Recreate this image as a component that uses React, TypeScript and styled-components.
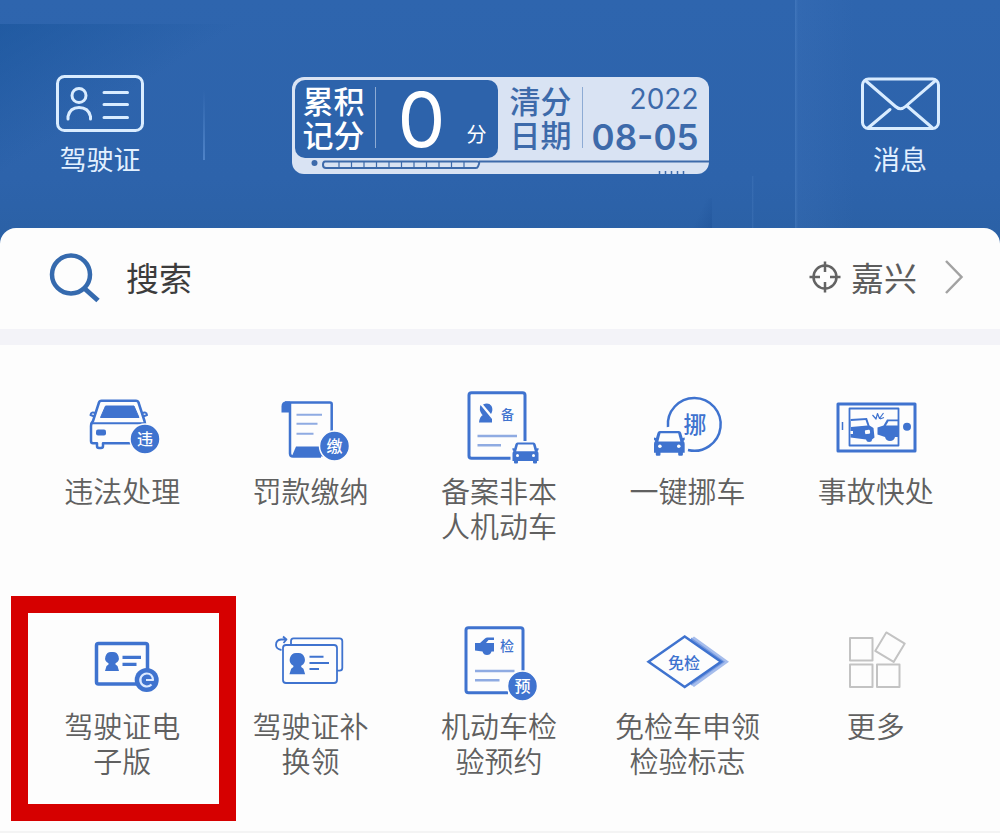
import React from "react";
import styled, { createGlobalStyle } from "styled-components";

const BLUE = "#3f73cf";
const SOFT = "#8fabe2";
const CJK = '"Noto Sans CJK SC", sans-serif';

const GlobalStyle = createGlobalStyle`
  *, *::before, *::after { box-sizing: border-box; }
  body { margin: 0; background: #fdfdfd; font-family: ${CJK}; }
  button, input { font: inherit; color: inherit; border: 0; padding: 0; margin: 0; background: none; }
  button { cursor: pointer; }
  svg { display: block; }
`;

const Page = styled.div`
  width: 100%;
`;

const Header = styled.header`
  display: flex;
  align-items: flex-start;
  height: 256px;
  padding-top: 72px;
  background:
    linear-gradient(to right, rgba(120, 170, 230, 0.25), rgba(90, 140, 210, 0.1) 3px, transparent 60px) right / 205px 100% no-repeat,
    linear-gradient(to right, rgba(110, 160, 220, 0.2), transparent 2px) right 246px top 176px / 2px 60px no-repeat,
    linear-gradient(115deg, transparent 50%, rgba(20, 70, 140, 0.4)) right 288px top 198px / 30px 40px no-repeat,
    linear-gradient(to bottom right, rgba(20, 80, 150, 0.5), transparent 50%) left top 24px / 240px 150px no-repeat,
    linear-gradient(to bottom, #2e65ae, #2d63ab 70%, #2a60a4);
`;

const HeaderButton = styled.button`
  display: flex;
  flex-direction: column;
  align-items: center;
  flex: 0 0 200px;
  color: #e2f0ff;
  font-size: 27px;
  line-height: 40px;
  gap: 5px;
`;

const HeaderDivider = styled.div<{ $visible?: boolean }>`
  flex: 0 0 2px;
  height: 70px;
  margin: 18px 3px 0;
  background: ${(p) => (p.$visible ? "linear-gradient(transparent, #4f83c8)" : "none")};
`;

const ScoreSlot = styled.div`
  flex: 1;
  display: flex;
  justify-content: center;
  padding-top: 5px;
`;

const ScoreCard = styled.section`
  flex: 0 1 417px;
  border-radius: 12px;
  background: #d9e3f3;
  color: #3d6aaa;
`;

const ScoreRow = styled.div`
  display: flex;
  height: 81px;
  padding: 3px 0 0 3px;
`;

const PointsPanel = styled.div`
  display: flex;
  align-items: center;
  flex: 0 0 203px;
  padding: 0 11px 0 8px;
  border-radius: 10px;
  background: #2d63ab;
  color: #fff;
`;

const DatePanel = styled.div`
  display: flex;
  align-items: center;
  flex: 1;
  padding: 0 10px 0 12px;
`;

const StackedTitle = styled.div`
  width: 62px;
  margin-bottom: 4px;
  font-size: 31px;
  line-height: 34px;
  font-weight: 500;
`;

const ThinRule = styled.div`
  flex: 0 0 1px;
  height: 61px;
  margin: 0 0 4px 10px;
  background: #8dabd4;
`;

const Points = styled.div`
  flex: 1;
  padding-left: 22px;
  font-family: Inter, ${CJK};
  font-size: 76px;
  line-height: 92px;
`;

const Unit = styled.span`
  padding-top: 30px;
  font-size: 20px;
  line-height: 30px;
`;

const ResetDate = styled.div`
  flex: 1;
  text-align: right;
  font-family: Inter, ${CJK};
  white-space: nowrap;
`;

const Year = styled.div`
  font-size: 28px;
  line-height: 36px;
`;

const Day = styled.div`
  font-size: 35px;
  line-height: 40px;
  font-weight: 600;
`;

const Sheet = styled.main`
  position: relative;
  margin-top: -28px;
  border-radius: 16px 16px 0 0;
  background: #fdfdfd;
`;

const SearchBar = styled.form`
  display: flex;
  align-items: center;
  height: 101px;
  padding: 0 36px 4px 49px;
`;

const SearchLabel = styled.label`
  flex: 0 0 52px;
`;

const SearchInput = styled.input`
  flex: 1;
  min-width: 0;
  padding-left: 25px;
  font-size: 33px;
  line-height: 48px;
  outline: none;
  &::placeholder { color: #3c3c3c; opacity: 1; }
`;

const CityButton = styled.button`
  display: flex;
  align-items: center;
  color: #5c5c5c;
  font-size: 33px;
  line-height: 48px;
`;

const CityName = styled.span`
  padding: 0 27px 0 10px;
`;

const Band = styled.div`
  height: 16px;
  background: #f3f3f8;
`;

const Grid = styled.nav`
  display: grid;
  grid-template-columns: repeat(5, 1fr);
  row-gap: 78px;
  padding: 43px 30px 51px 28px;
  border-bottom: 2px solid #f4f4f4;
`;

const Tile = styled.a`
  position: relative;
  display: flex;
  flex-direction: column;
  align-items: center;
  gap: 5px;
  min-height: 157px;
  color: #606060;
  text-decoration: none;
`;

const TileLabel = styled.span`
  font-size: 29px;
  line-height: 35px;
  font-weight: 350;
  text-align: center;
  white-space: pre-line;
`;

const Highlight = styled.span`
  position: absolute;
  inset: -27px -20px -41px -17px;
  border: 17px solid #d60000;
  pointer-events: none;
`;

const Glyph = styled.text`
  font-family: ${CJK};
  font-weight: 500;
  text-anchor: middle;
  dominant-baseline: central;
`;

const IconFrame = ({ children }: { children: React.ReactNode }) => (
  <svg width="100" height="80" viewBox="0 0 100 80" fill="none" stroke={BLUE} strokeWidth="2.5" strokeLinejoin="round" aria-hidden="true">
    {children}
  </svg>
);

const Char = ({ x, y, size, color = BLUE, children }: { x: number; y: number; size: number; color?: string; children: string }) => (
  <Glyph x={x} y={y} fontSize={size} fill={color} stroke="none">{children}</Glyph>
);

const Badge = ({ x, y, children }: { x: number; y: number; children: string }) => (
  <>
    <circle cx={x} cy={y} r="15" fill={BLUE} stroke="#fdfdfd" strokeWidth="1.5" />
    <Char x={x} y={y - 1} size={16} color="#fff">{children}</Char>
  </>
);

const MiniCar = ({ x, y, scale = 1 }: { x: number; y: number; scale?: number }) => (
  <g transform={`translate(${x} ${y}) scale(${scale})`} stroke="none">
    <path d="M5 0H21Q22.500 0 23 1.500L24.300 6L26 5.500V7.500L25 8.500Q26 9.500 26 11V18.500H24.500V20Q24.500 21 23.500 21H21.500Q20.500 21 20.500 20V18.500H5.500V20Q5.500 21 4.500 21H2.500Q1.500 21 1.500 20V18.500H0V11Q0 9.500 1 8.500L0 7.500V5.500L1.700 6L3 1.500Q3.500 0 5 0Z" fill={BLUE} />
    <path d="M5.500 2H20.500L22.300 8.800H3.700Z" fill="#fdfdfd" />
    <circle cx="5" cy="13" r="1.500" fill="#fdfdfd" />
    <circle cx="21" cy="13" r="1.500" fill="#fdfdfd" />
  </g>
);

const ViolationIcon = () => (
  <IconFrame>
    <path d="M60 55.300H31V58Q31 60 29 60H27Q25 60 25 58V55.300H21Q19 55.300 19 53V38Q19 35 21 33L27 14.500Q27.500 12.700 29.500 12.700H64Q66 12.700 66.500 14.500L72.500 33L73.500 38" />
    <path d="M24 25.500Q19 23 18.500 27L22.500 28.500M69.500 25.500Q74.500 23 75 27L71 28.500M19.500 35.300H73" strokeWidth="2" />
    <path d="M33.500 18H62L67 29.500H28.500Z" fill={BLUE} strokeWidth="1" />
    <rect x="24" y="41.500" width="10" height="6" rx="2" fill={BLUE} stroke="none" />
    <Badge x={73} y={51}>违</Badge>
  </IconFrame>
);

const FineIcon = () => (
  <IconFrame>
    <path d="M24 14.500H69Q70.700 14.500 70.700 16V45M60 68.500H32Q29 68.500 29 65.500V15" />
    <path d="M29 13.500H25Q20.500 13.500 20.500 18.500V24.500H29Z" fill={BLUE} stroke="none" />
    <path d="M31 68L35 58.500H62V68.500Z" fill={BLUE} stroke="none" />
    <path d="M35.500 26.700H61M35.500 35.700H56.500M35.500 45.700H52.500" stroke={SOFT} strokeWidth="2" />
    <Badge x={73.500} y={58}>缴</Badge>
  </IconFrame>
);

const RegisterIcon = () => (
  <IconFrame>
    <path d="M76 53V7Q76 4.700 73.500 4.700H22.500Q20 4.700 20 7V68Q20 70.300 22.500 70.300H61.500" strokeWidth="3" />
    <path d="M31.500 17L43 31Q36.500 30 33 26.500Q29.500 22 31.500 17ZM34 16.500Q39.500 14 42.500 18Q44.500 22 42 26ZM30 34.500Q30.500 28.500 34.500 26.500Q38 30.500 43 31V34.500Z" fill={BLUE} stroke="none" />
    <Char x={58.500} y={25} size={13}>备</Char>
    <path d="M28.500 48H68M28.500 57.300H52" stroke={SOFT} />
    <MiniCar x={63.500} y={54.500} />
  </IconFrame>
);

const MoveCarIcon = () => (
  <IconFrame>
    <path d="M31 39A26.400 26.400 0 1 1 51 62" />
    <Char x={58} y={35} size={23}>挪</Char>
    <MiniCar x={17} y={43} scale={1.18} />
  </IconFrame>
);

const AccidentIcon = () => (
  <IconFrame>
    <rect x="12" y="16" width="77" height="47" strokeWidth="3" />
    <rect x="23.500" y="20.500" width="49" height="37" strokeWidth="1.800" />
    <path d="M16.500 34V42" strokeWidth="1.500" />
    <circle cx="81" cy="38.700" r="4" fill={BLUE} stroke="none" />
    <path d="M24.500 31L41 30L43.500 37.500L47.500 40L48.500 49.500L46 51.500Q46 54 43 54Q40.500 54 40 51.500L24.500 49.500Z" fill={BLUE} stroke="none" />
    <path d="M25 33L39.500 32L41.500 37.500L25 39Z" fill="#fdfdfd" stroke="none" />
    <rect x="39" y="42" width="5" height="4" rx="1" fill="#fdfdfd" stroke="none" transform="rotate(-8 41 44)" />
    <rect x="24.500" y="43" width="2.500" height="3" fill="#fdfdfd" stroke="none" />
    <path d="M51.500 39.500L57.500 37.500L61 31.500H72V49H69Q68 53 64 53Q60 53 59 49L51.500 46.500Z" fill={BLUE} stroke="none" />
    <path d="M62.500 33.300H71.500V37.500H60Z" fill="#fdfdfd" stroke="none" />
    <path d="M46.500 27L50 31L51.500 25.500L53.500 30.500L57.500 25M54 31L58 29.500" strokeWidth="1.200" />
  </IconFrame>
);

const PersonShape = ({ x, y, scale = 1 }: { x: number; y: number; scale?: number }) => (
  <path transform={`translate(${x} ${y}) scale(${scale})`} d="M0 -8.500A6 6 0 0 1 3.500 2.800V4L5.500 5.500L7 10.500H-7L-5.500 5.500L-3.500 4V2.800A6 6 0 0 1 0 -8.500Z" fill={BLUE} stroke="none" />
);

const ELicenseIcon = () => (
  <IconFrame>
    <rect x="24.500" y="20.500" width="51" height="40.500" rx="2" strokeWidth="3.500" />
    <PersonShape x={40} y={37.500} />
    <path d="M50.500 34.300H69M50.500 41.300H64.500" strokeWidth="3.200" />
    <circle cx="74.700" cy="57" r="12" fill={BLUE} stroke="none" />
    <path d="M74 57H81Q80.500 50.500 74.700 50.500A6.500 6.500 0 1 0 79.500 61.500" stroke="#dce9ff" strokeWidth="2.200" />
  </IconFrame>
);

const ReplaceIcon = () => (
  <IconFrame>
    <path d="M30 22V18Q30 15.300 32.500 15.300H78.500Q81.300 15.300 81.300 18V45Q81.300 47.700 78.500 47.700H76" strokeWidth="1.800" />
    <rect x="22" y="22" width="54" height="38" rx="3" strokeWidth="1.800" />
    <PersonShape x={36.300} y={39.500} scale={1.120} />
    <path d="M48.500 33.700H62.500M48.500 40H68M48.500 46H58" strokeWidth="2" />
    <path d="M20.500 27Q15 26 15 22Q15 17 20 16.500H25M22 13.500L25.500 16.500L22.500 20" strokeWidth="1.800" />
  </IconFrame>
);

const InspectionIcon = () => (
  <IconFrame>
    <path d="M74 50V7Q74 4.700 71.500 4.700H19.500Q17 4.700 17 7V67.500Q17 69.700 19.500 69.700H59" strokeWidth="3" />
    <path d="M26 20H31L36 15.500Q37 14.500 38.500 14.500H45V17H39.500L37 20H45V28.500H42.500Q41.500 32 38 32Q34.500 32 33.500 28.500L26 27.500Z" fill={BLUE} stroke="none" />
    <Char x={58} y={21.500} size={14}>检</Char>
    <path d="M26 48H65.500M26 57.300H50.500" stroke={SOFT} />
    <Badge x={73.500} y={63}>预</Badge>
  </IconFrame>
);

const ExemptIcon = () => (
  <IconFrame>
    <path d="M57 13.500L92 38.700L57 64L53 61L82 38.700L53 16.500Z" fill="#a6bdec" stroke="none" />
    <path d="M54 14.500L88 38.700L54 62.500Z" fill="#779ae0" stroke="none" />
    <path d="M11.500 38.700L47.700 13.500L84 38.700L47.700 64Z" fill="#fdfdfd" strokeLinejoin="miter" />
    <Char x={47} y={38.500} size={16}>免检</Char>
  </IconFrame>
);

const MoreIcon = () => (
  <IconFrame>
    <g stroke="#c3c3c3" strokeWidth="2">
      <rect x="24" y="15" width="22.500" height="22.500" />
      <rect x="24" y="41.500" width="22.500" height="22.500" />
      <rect x="51" y="41.500" width="22.500" height="22.500" />
      <rect x="53.200" y="13.500" width="21.500" height="21.500" transform="rotate(31 64 24.300)" />
    </g>
  </IconFrame>
);

const services = [
  { label: "违法处理", Icon: ViolationIcon },
  { label: "罚款缴纳", Icon: FineIcon },
  { label: "备案非本\n人机动车", Icon: RegisterIcon },
  { label: "一键挪车", Icon: MoveCarIcon },
  { label: "事故快处", Icon: AccidentIcon },
  { label: "驾驶证电\n子版", Icon: ELicenseIcon, highlighted: true },
  { label: "驾驶证补\n换领", Icon: ReplaceIcon },
  { label: "机动车检\n验预约", Icon: InspectionIcon },
  { label: "免检车申领\n检验标志", Icon: ExemptIcon },
  { label: "更多", Icon: MoreIcon },
];

export default function App() {
  return (
    <Page>
      <GlobalStyle />
      <Header>
        <HeaderButton type="button">
          <svg width="92" height="62" viewBox="0 0 92 62" fill="none" stroke="#d9ecff" strokeWidth="3" strokeLinecap="round" aria-hidden="true">
            <rect x="3.500" y="4.500" width="85" height="54" rx="7" />
            <circle cx="25" cy="23.500" r="7" />
            <path d="M14 47V44.500Q16 35.500 25 35.500Q34.500 35.500 36.500 44.500V47M50 20.500H73.500M50 32.500H73.500M50 45.500H73.500" />
          </svg>
          驾驶证
        </HeaderButton>
        <HeaderDivider $visible />
        <ScoreSlot>
          <ScoreCard>
            <ScoreRow>
              <PointsPanel>
                <StackedTitle>累积记分</StackedTitle>
                <ThinRule />
                <Points>0</Points>
                <Unit>分</Unit>
              </PointsPanel>
              <DatePanel>
                <StackedTitle>清分日期</StackedTitle>
                <ThinRule />
                <ResetDate>
                  <Year>2022</Year>
                  <Day>08-05</Day>
                </ResetDate>
              </DatePanel>
            </ScoreRow>
            <svg width="417" height="16" viewBox="0 0 417 16" fill="none" stroke="#3d6aaa" strokeWidth="2" aria-hidden="true">
              <circle cx="22.500" cy="5" r="3" fill="#3d6aaa" stroke="none" />
              <path d="M187 3.500H417" />
              <path d="M33 3.500H185Q188 3.500 187 6L186 8.500Q185.500 10 184 10H34Q31 10 31 7Q31 3.500 33 3.500Z" />
              <path d="M47 3V10M59.500 3V10M72 3V10M84.500 3V10M97 3V10M109.500 3V10M122 3V10M134.500 3V10M147 3V10M159.500 3V10M172 3V10" strokeWidth="1.200" />
              <path d="M367.500 13V16M373.500 13V16M379.500 13V16M385.500 13V16M391.500 13V16" strokeWidth="1.500" />
            </svg>
          </ScoreCard>
        </ScoreSlot>
        <HeaderDivider />
        <HeaderButton type="button">
          <svg width="92" height="62" viewBox="0 0 92 62" fill="none" stroke="#d9ecff" strokeWidth="3" strokeLinecap="round" strokeLinejoin="round" aria-hidden="true">
            <rect x="8.500" y="7" width="76" height="49.500" rx="6" />
            <path d="M12 9L41.500 34.500Q46.500 39 51.500 34.500L81 9M36 37.500L14 56M53 34L78 55.500" />
          </svg>
          消息
        </HeaderButton>
      </Header>
      <Sheet>
        <SearchBar role="search">
          <SearchLabel htmlFor="service-search" aria-label="搜索">
            <svg width="52" height="52" viewBox="0 0 52 52" fill="none" stroke="#356aae" strokeWidth="4.500" aria-hidden="true">
              <circle cx="22" cy="23.500" r="19" />
              <path d="M35.500 37.500L49 49.500" strokeWidth="5" />
            </svg>
          </SearchLabel>
          <SearchInput id="service-search" type="text" placeholder="搜索" />
          <CityButton type="button">
            <svg width="32" height="32" viewBox="0 0 32 32" fill="none" stroke="#636363" strokeWidth="2.500" aria-hidden="true">
              <circle cx="16" cy="16" r="11.500" />
              <path d="M16 0.500V11M16 21V31.500M0.500 16H11M21 16H31.500" />
            </svg>
            <CityName>嘉兴</CityName>
            <svg width="20" height="36" viewBox="0 0 20 36" fill="none" stroke="#a2a2a2" strokeWidth="2.500" aria-hidden="true">
              <path d="M2 2L17.500 18L2 34" />
            </svg>
          </CityButton>
        </SearchBar>
        <Band />
        <Grid aria-label="服务">
          {services.map(({ label, Icon, highlighted }) => (
            <Tile key={label} href="#">
              <Icon />
              <TileLabel>{label}</TileLabel>
              {highlighted && <Highlight />}
            </Tile>
          ))}
        </Grid>
      </Sheet>
    </Page>
  );
}
